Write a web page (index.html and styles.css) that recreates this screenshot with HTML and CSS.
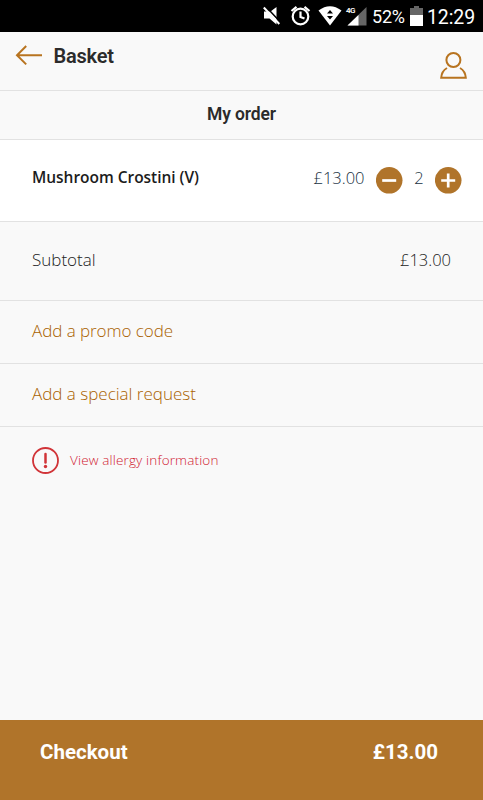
FILE: index.html
```html
<!DOCTYPE html>
<html lang="en">
<head>
<meta charset="utf-8">
<title>Basket</title>
<link rel="stylesheet" href="styles.css">
</head>
<body>
<div class="status">
  <svg class="status-icons" width="119" height="32" viewBox="253 0 119 32">
    <path d="M264 11.500h6.500l6-4.500v17.500l-7-6H264z" fill="#fff"/>
    <path d="M265.500 6.200l15.500 16.500" stroke="#000" stroke-width="1.500"/>
    <path d="M263.800 7.500l15.500 16.500" stroke="#fff" stroke-width="2"/>
    <g fill="none" stroke="#fff" stroke-width="2.200">
      <circle cx="300.500" cy="16.500" r="7.800"/>
      <path d="M300.500 11.500v5.500l4 1.500M291.500 11l5-4.200M309.500 11l-5-4.200"/>
    </g>
    <path d="M318.500 10.500q11.500-8.500 23 0L330 25.500z" fill="#fff"/>
    <path d="M327 13.500l3-3.500 3 3.500zM327 16l3 3.500 3-3.500z" fill="#000"/>
    <path d="M347.500 25.500L366.500 7v18.500z" fill="#666"/>
    <path d="M347.500 25.500L358.500 15v10.500z" fill="#fff"/>
  </svg>
  <span class="network">4G</span>
  <span class="percent">52%</span>
  <svg class="battery" width="13" height="20" viewBox="0 0 13 20">
    <path d="M0 2h4V0h5v2h4v7H0z" fill="#666"/><path d="M0 9h13v11H0z" fill="#fff"/>
  </svg>
  <span class="clock">12:29</span>
</div>
<header class="header">
  <svg class="back" width="28" height="22" viewBox="0 0 28 22"><path d="M11.200 1L2 10.200l9.200 9.200M2 10.200h25" fill="none" stroke="#b87420" stroke-width="2"/></svg>
  <h1>Basket</h1>
  <svg class="user" width="28" height="28" viewBox="0 0 28 28"><g fill="none" stroke="#b87420" stroke-width="2"><circle cx="13.400" cy="8" r="7"/><path d="M7 16C3.500 18 1.500 21 1.200 25.800h24.600c-.3-4.800-2.300-7.800-5.800-9.800"/></g></svg>
</header>
<h2 class="title">My order</h2>
<section class="item">
  <span class="name">Mushroom Crostini (V)</span>
  <span class="price">£13.00</span>
  <svg class="round" width="27" height="27" viewBox="0 0 27 27"><circle cx="13.200" cy="13.300" r="13.300" fill="#b0742a"/><path d="M6.200 13.500h14" stroke="#fff" stroke-width="2.700"/></svg>
  <span class="qty">2</span>
  <svg class="round" width="27" height="27" viewBox="0 0 27 27"><circle cx="13.200" cy="13.300" r="13.300" fill="#b0742a"/><path d="M6.200 13.500h14M13.200 6.500v14" stroke="#fff" stroke-width="2.700"/></svg>
</section>
<section class="subtotal"><span class="sub-label">Subtotal</span><span class="price">£13.00</span></section>
<a class="action promo">Add a promo code</a>
<a class="action request">Add a special request</a>
<a class="allergy">
  <svg width="27" height="27" viewBox="0 0 27 27"><circle cx="13.500" cy="13.500" r="12.500" fill="none" stroke="#d13438" stroke-width="1.800"/><path d="M13.500 7v8.500" stroke="#d13438" stroke-width="2.500" stroke-linecap="round"/><circle cx="13.500" cy="19.500" r="1.700" fill="#d13438"/></svg>
  <span>View allergy information</span>
</a>
<footer class="checkout"><span>Checkout</span><span>£13.00</span></footer>
</body>
</html>
```
FILE: styles.css
```css
* { box-sizing: border-box; }
body {
  margin: 0;
  height: 800px;
  display: flex;
  flex-direction: column;
  background: #f9f9f9;
  color: #222;
  font: 300 17px/24px "Open Sans", "Noto Sans", sans-serif;
  overflow: hidden;
}
h1, h2 { margin: 0; font-family: Roboto, sans-serif; color: #2b2b2b; }
svg { display: block; flex: none; }
.status {
  position: relative;
  height: 32px;
  flex: none;
  display: flex;
  padding-left: 253px;
  background: #000;
  color: #fff;
  font-family: Roboto, sans-serif;
  font-weight: 400;
  white-space: nowrap;
}
.network { position: absolute; left: 346px; top: 5px; font-size: 8px; line-height: 12px; font-weight: 600; letter-spacing: -0.5px; }
.percent { width: 38px; padding-top: 5px; font-size: 18px; letter-spacing: -0.2px; }
.battery { margin-top: 6px; }
.clock { margin-left: 4px; padding-top: 6px; font-size: 19.500px; letter-spacing: -0.1px; }
.header {
  height: 59px;
  flex: none;
  display: flex;
  padding: 0 15px;
  border-bottom: 1px solid #e2e2e2;
}
.back { margin-top: 13px; }
.header h1 { flex: 1; margin: 12px 0 0 10.500px; font-size: 20px; line-height: 25px; font-weight: 600; letter-spacing: -0.2px; }
.user { margin-top: 20px; }
.title {
  height: 49px;
  flex: none;
  padding-top: 11px;
  border-bottom: 1px solid #e2e2e2;
  text-align: center;
  font-size: 17.500px;
  line-height: 24px;
  font-weight: 600;
  letter-spacing: -0.15px;
}
.item {
  height: 82px;
  flex: none;
  display: flex;
  padding: 26px 21px 0 32px;
  background: #fff;
  border-bottom: 1px solid #e2e2e2;
}
.name { flex: 1; color: #1c1c1c; font-size: 15.500px; font-weight: 600; letter-spacing: -0.03px; }
.price { font-size: 16.500px; }
.item .price { width: 62.500px; color: #20313f; }
.item .price, .qty, .name { line-height: 23px; }
.round { margin-top: 1px; }
.qty { width: 32px; text-align: center; color: #20313f; font-size: 16.500px; }
.subtotal {
  height: 79px;
  flex: none;
  display: flex;
  justify-content: space-between;
  padding: 26px 32px 0;
  border-bottom: 1px solid #e2e2e2;
}
.action {
  height: 63px;
  flex: none;
  padding: 18px 32px 0;
  border-bottom: 1px solid #e2e2e2;
  color: #a96200;
}
.promo { letter-spacing: -0.05px; }
.allergy {
  flex: 1;
  display: flex;
  gap: 11px;
  padding: 20px 32px 0;
  color: #d02030;
  font-size: 13.500px;
  line-height: 26px;
  letter-spacing: 0.15px;
}
.checkout {
  height: 80px;
  flex: none;
  display: flex;
  justify-content: space-between;
  padding: 20px 45px 0 40px;
  background: #b0742a;
  color: #fff;
  font: 700 20.500px/24px Roboto, sans-serif;
}
```
